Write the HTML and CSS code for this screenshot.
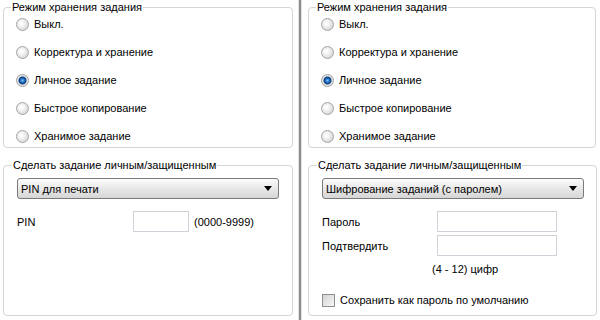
FILE: index.html
```html
<!DOCTYPE html>
<html lang="ru">
<head>
    <meta charset="UTF-8">
    <title>Хранение заданий</title>
    <link rel="stylesheet" href="styles.css">
</head>
<body>
    <div class="page">
        <!-- Левая панель: PIN -->
        <div class="panel panel-left">
            <fieldset class="group group-mode">
                <legend>Режим хранения задания</legend>
                <div class="radio-list">
                    <label class="radio-row"><span class="radio"></span>Выкл.</label>
                    <label class="radio-row"><span class="radio"></span>Корректура и хранение</label>
                    <label class="radio-row"><span class="radio checked"></span>Личное задание</label>
                    <label class="radio-row"><span class="radio"></span>Быстрое копирование</label>
                    <label class="radio-row"><span class="radio"></span>Хранимое задание</label>
                </div>
            </fieldset>
            <fieldset class="group group-secure">
                <legend>Сделать задание личным/защищенным</legend>
                <div class="select">
                    <span>PIN для печати</span>
                    <span class="arrow"></span>
                </div>
                <div class="field-row">
                    <span class="field-label pin-label">PIN</span>
                    <span class="input pin-input"></span>
                    <span class="hint">(0000-9999)</span>
                </div>
            </fieldset>
        </div>

        <div class="divider"></div>

        <!-- Правая панель: пароль -->
        <div class="panel panel-right">
            <fieldset class="group group-mode">
                <legend>Режим хранения задания</legend>
                <div class="radio-list">
                    <label class="radio-row"><span class="radio"></span>Выкл.</label>
                    <label class="radio-row"><span class="radio"></span>Корректура и хранение</label>
                    <label class="radio-row"><span class="radio checked"></span>Личное задание</label>
                    <label class="radio-row"><span class="radio"></span>Быстрое копирование</label>
                    <label class="radio-row"><span class="radio"></span>Хранимое задание</label>
                </div>
            </fieldset>
            <fieldset class="group group-secure">
                <legend>Сделать задание личным/защищенным</legend>
                <div class="select">
                    <span>Шифрование заданий (с паролем)</span>
                    <span class="arrow"></span>
                </div>
                <div class="field-row">
                    <span class="field-label">Пароль</span>
                    <span class="input pass-input"></span>
                </div>
                <div class="field-row confirm-row">
                    <span class="field-label">Подтвердить</span>
                    <span class="input pass-input"></span>
                </div>
                <div class="digits">(4 - 12) цифр</div>
                <label class="check-row"><span class="checkbox"></span>Сохранить как пароль по умолчанию</label>
            </fieldset>
        </div>
    </div>
</body>
</html>
```

FILE: styles.css
```css
/* Диалог хранения заданий */
body {
    margin: 0;
    background: #fff;
    font-family: "Liberation Sans", Arial, sans-serif;
    font-size: 11px;
    color: #000;
}
.page {
    display: flex;
    width: 600px;
    height: 320px;
}
.panel {
    display: flex;
    flex-direction: column;
}
.panel-left {
    margin-left: 3px;
    width: 290px;
}
.panel-right {
    margin-left: 6px;
    width: 288px;
}
.divider {
    margin-left: 5px;
    width: 2px;
    background: #8c8c8c;
    border-left: 1px solid #e2e2e2;
    border-right: 1px solid #e2e2e2;
}
.group {
    margin: 0;
    padding: 0 12px;
    border: 1px solid #d5d5d5;
    border-radius: 4px;
    box-sizing: border-box;
}
.group legend {
    padding: 0 1px;
    margin-left: -5px;
    line-height: 14px;
}
.group-mode {
    height: 148px;
}
.group-secure {
    margin-top: 10px;
    height: 158px;
    padding-left: 13px;
}
.radio-list {
    display: flex;
    flex-direction: column;
    gap: 14px;
    padding-top: 3px;
}
.radio-row {
    display: flex;
    align-items: center;
    height: 14px;
}
.radio {
    width: 11px;
    height: 11px;
    margin-right: 5px;
    border: 1px solid #a4a4a4;
    border-radius: 50%;
    background: radial-gradient(circle at 40% 40%, #ffffff 10%, #d0d0d0 90%);
}
.radio.checked {
    background: radial-gradient(circle, #7fc4f5 0, #1f6fc0 2px, #0c3d7a 3.5px, #e8e8e8 4.5px, #c8c8c8 100%);
}
.select {
    display: flex;
    align-items: center;
    justify-content: space-between;
    margin-top: 6px;
    width: 262px;
    height: 21px;
    padding: 0 6px 0 3px;
    box-sizing: border-box;
    border: 1px solid #7a7a7a;
    border-radius: 3px;
    background: linear-gradient(#fcfcfc, #e6e6e6 55%, #d6d6d6);
}
.arrow {
    width: 0;
    height: 0;
    border-left: 4px solid transparent;
    border-right: 4px solid transparent;
    border-top: 5px solid #000;
}
.field-row {
    display: flex;
    align-items: center;
    margin-top: 12px;
    height: 21px;
}
.confirm-row {
    margin-top: 3px;
}
.field-label {
    width: 115px;
}
.pin-label {
    width: 116px;
}
.input {
    height: 21px;
    box-sizing: border-box;
    border: 1px solid #cdd3d9;
    background: #fff;
}
.pin-input {
    width: 56px;
    margin-right: 5px;
}
.pass-input {
    width: 120px;
}
.digits {
    margin-top: 6px;
    padding-left: 110px;
    line-height: 14px;
}
.check-row {
    display: flex;
    align-items: center;
    margin-top: 17px;
    height: 14px;
}
.checkbox {
    width: 11px;
    height: 11px;
    margin-right: 5px;
    border: 1px solid #8e8e8e;
    background: linear-gradient(135deg, #d4d4d4, #f6f6f6);
}
```
